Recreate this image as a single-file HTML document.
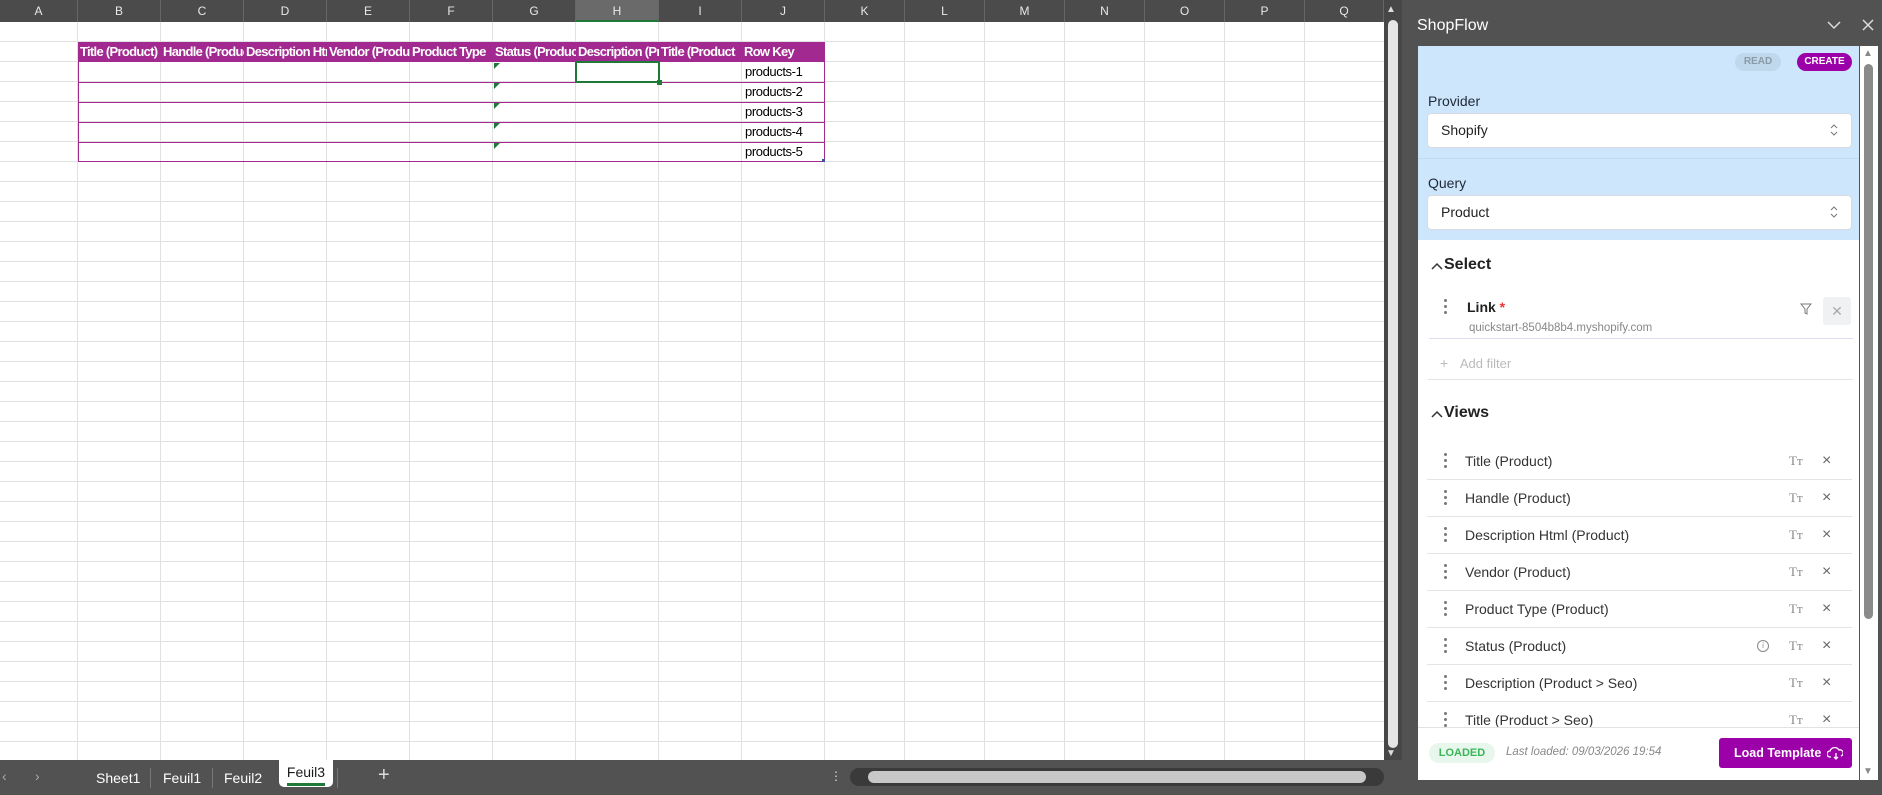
<!DOCTYPE html>
<html><head><meta charset="utf-8"><style>
*{box-sizing:border-box;margin:0;padding:0}
body{width:1882px;height:795px;overflow:hidden;background:#fff;font-family:"Liberation Sans",sans-serif;position:relative}
.a{position:absolute}
.colh{top:0;height:22px;background:#4b4b4b;color:#e8e8e8;font-size:12px;line-height:22px;text-align:center;border-right:1px solid #666}
.vl{top:22px;height:738px;width:1px;background:#e1e1e1}
.grid{left:0;top:22px;width:1384px;height:738px;background:repeating-linear-gradient(to bottom,transparent 0,transparent 19px,#e1e1e1 19px,#e1e1e1 20px)}
.th{top:42px;height:20px;background:#a2298f;color:#fff;font-weight:bold;font-size:13px;line-height:20px;white-space:nowrap;overflow:hidden;padding-left:2px;letter-spacing:-0.7px}
.rowb{left:78px;width:747px;height:1px;background:#a2298f}
.pk{left:742px;width:83px;height:20px;font-size:13px;line-height:20px;padding-left:3px;letter-spacing:-0.4px}
.tri{width:0;height:0;border-top:6px solid #1e7a36;border-right:6px solid transparent;left:494px}
.panel{left:1402px;top:0;width:480px;height:795px;background:#525252}
.lbl{font-size:14px;color:#1f2937;font-weight:500}
.sel{left:1427px;width:425px;height:35px;background:#fff;border:1px solid #d6dbe1;border-radius:4px;font-size:14px;color:#222;line-height:33px;padding-left:13px}
.vrow{left:1427px;width:425px;height:37px;border-bottom:1px solid #e2e4e8;font-size:14px;color:#333;line-height:36px}
.dots{position:absolute;left:17px;top:10px;width:4px}
.dots i{display:block;width:3px;height:3px;border-radius:50%;background:#777;margin-bottom:3px}
.tt{position:absolute;left:362px;font-size:13px;color:#888;font-family:"Liberation Serif",serif}
.x{position:absolute;left:395px;color:#666;font-size:16px}
</style></head><body>
<div class="a colh" style="left:0;width:78px">A</div>
<div class="a colh" style="left:78px;width:83px">B</div>
<div class="a colh" style="left:161px;width:83px">C</div>
<div class="a colh" style="left:244px;width:83px">D</div>
<div class="a colh" style="left:327px;width:83px">E</div>
<div class="a colh" style="left:410px;width:83px">F</div>
<div class="a colh" style="left:493px;width:83px">G</div>
<div class="a colh" style="left:576px;width:83px;background:#6a6a6a;border-bottom:2px solid #1e7a36">H</div>
<div class="a colh" style="left:659px;width:83px">I</div>
<div class="a colh" style="left:742px;width:83px">J</div>
<div class="a colh" style="left:825px;width:80px">K</div>
<div class="a colh" style="left:905px;width:80px">L</div>
<div class="a colh" style="left:985px;width:80px">M</div>
<div class="a colh" style="left:1065px;width:80px">N</div>
<div class="a colh" style="left:1145px;width:80px">O</div>
<div class="a colh" style="left:1225px;width:80px">P</div>
<div class="a colh" style="left:1305px;width:79px">Q</div>
<div class="a grid"></div>
<div class="a vl" style="left:77px"></div><div class="a vl" style="left:160px"></div><div class="a vl" style="left:243px"></div><div class="a vl" style="left:326px"></div><div class="a vl" style="left:409px"></div><div class="a vl" style="left:492px"></div><div class="a vl" style="left:575px"></div><div class="a vl" style="left:658px"></div><div class="a vl" style="left:741px"></div><div class="a vl" style="left:824px"></div><div class="a vl" style="left:904px"></div><div class="a vl" style="left:984px"></div><div class="a vl" style="left:1064px"></div><div class="a vl" style="left:1144px"></div><div class="a vl" style="left:1224px"></div><div class="a vl" style="left:1304px"></div>
<div class="a" style="left:78px;top:42px;width:1px;height:120px;background:#a2298f"></div>
<div class="a" style="left:824px;top:42px;width:1px;height:120px;background:#a2298f"></div>
<div class="a th" style="left:78px;width:83px">Title (Product)</div>
<div class="a th" style="left:161px;width:83px">Handle (Product)</div>
<div class="a th" style="left:244px;width:83px">Description Html</div>
<div class="a th" style="left:327px;width:83px">Vendor (Product)</div>
<div class="a th" style="left:410px;width:83px">Product Type</div>
<div class="a th" style="left:493px;width:83px">Status (Product)</div>
<div class="a th" style="left:576px;width:83px">Description (Pr</div>
<div class="a th" style="left:659px;width:83px">Title (Product</div>
<div class="a th" style="left:742px;width:83px">Row Key</div>
<div class="a rowb" style="top:82px"></div><div class="a rowb" style="top:102px"></div><div class="a rowb" style="top:122px"></div><div class="a rowb" style="top:142px"></div><div class="a rowb" style="top:161px"></div>
<div class="a pk" style="top:62px">products-1</div><div class="a pk" style="top:82px">products-2</div><div class="a pk" style="top:102px">products-3</div><div class="a pk" style="top:122px">products-4</div><div class="a pk" style="top:142px">products-5</div>
<div class="a tri" style="top:63px"></div><div class="a tri" style="top:83px"></div><div class="a tri" style="top:103px"></div><div class="a tri" style="top:123px"></div><div class="a tri" style="top:143px"></div>
<div class="a" style="left:575px;top:61px;width:85px;height:22px;border:2px solid #1e7a36"></div>
<div class="a" style="left:657px;top:80px;width:5px;height:5px;background:#1e7a36"></div>
<div class="a" style="left:822px;top:159px;width:3px;height:3px;background:#4050a0"></div>
<div class="a" style="left:1384px;top:0;width:18px;height:760px;background:#474747"></div>
<div class="a" style="left:1388px;top:20px;width:10px;height:728px;background:#e6e6e6;border-radius:5px"></div>
<div class="a" style="left:1386px;top:4px;color:#ddd;font-size:10px">▲</div>
<div class="a" style="left:1386px;top:748px;color:#ddd;font-size:10px">▼</div>
<div class="a" style="left:0;top:760px;width:1402px;height:35px;background:#525252"></div>
<div class="a" style="left:2px;top:768px;color:#aaa;font-size:14px">‹</div>
<div class="a" style="left:35px;top:768px;color:#aaa;font-size:14px">›</div>
<div class="a" style="left:96px;top:770px;color:#fff;font-size:14px">Sheet1</div>
<div class="a" style="left:150px;top:768px;width:1px;height:20px;background:#777"></div>
<div class="a" style="left:163px;top:770px;color:#fff;font-size:14px">Feuil1</div>
<div class="a" style="left:212px;top:768px;width:1px;height:20px;background:#777"></div>
<div class="a" style="left:224px;top:770px;color:#fff;font-size:14px">Feuil2</div>
<div class="a" style="left:279px;top:760px;width:54px;height:27px;background:#fff;border-radius:0 0 5px 5px;color:#1a1a1a;font-size:14px;text-align:center;line-height:22px;padding-top:1px">Feuil3<div style="margin:0 auto;width:38px;height:3px;background:#1e7a36"></div></div>
<div class="a" style="left:337px;top:768px;width:1px;height:20px;background:#777"></div>
<div class="a" style="left:378px;top:764px;color:#ddd;font-size:20px">+</div>
<div class="a" style="left:830px;top:769px;color:#ddd;font-size:12px">⋮</div>
<div class="a" style="left:850px;top:768px;width:534px;height:18px;background:#3a3a3a;border-radius:9px"></div>
<div class="a" style="left:868px;top:771px;width:498px;height:12px;background:#c8c8c8;border-radius:6px"></div>
<div class="a panel"></div>
<div class="a" style="left:1417px;top:17px;color:#fff;font-size:16px">ShopFlow</div>
<svg class="a" style="left:1827px;top:20px" width="14" height="10"><path d="M1 2l6 6 6-6" stroke="#ddd" stroke-width="1.5" fill="none"/></svg>
<svg class="a" style="left:1862px;top:19px" width="12" height="12"><path d="M1 1l10 10M11 1L1 11" stroke="#ddd" stroke-width="1.5"/></svg>
<div class="a" style="left:1418px;top:46px;width:441px;height:734px;background:#fff"></div>
<div class="a" style="left:1418px;top:46px;width:441px;height:194px;background:#cde6fb"></div>
<div class="a" style="left:1418px;top:158px;width:441px;height:1px;background:#c2dbef"></div>
<div class="a" style="left:1735px;top:53px;width:46px;height:18px;border-radius:9px;background:#c0d8ec;color:#8a9aa8;font-size:10px;font-weight:bold;text-align:center;line-height:18px">READ</div>
<div class="a" style="left:1797px;top:53px;width:55px;height:18px;border-radius:9px;background:#9c00a8;color:#fff;font-size:10px;font-weight:bold;text-align:center;line-height:18px">CREATE</div>
<div class="a lbl" style="left:1428px;top:93px">Provider</div>
<div class="a sel" style="top:113px">Shopify</div>
<div class="a lbl" style="left:1428px;top:175px">Query</div>
<div class="a sel" style="top:195px">Product</div>
<svg class="a" style="left:1830px;top:123px" width="8" height="14"><path d="M1 5l3-3 3 3M1 9l3 3 3-3" stroke="#777" fill="none"/></svg>
<svg class="a" style="left:1830px;top:205px" width="8" height="14"><path d="M1 5l3-3 3 3M1 9l3 3 3-3" stroke="#777" fill="none"/></svg>
<svg class="a" style="left:1431px;top:262px" width="12" height="8"><path d="M1 7l5-5 5 5" stroke="#333" stroke-width="1.5" fill="none"/></svg>
<div class="a" style="left:1444px;top:256px;font-size:16px;font-weight:bold;color:#222">Select</div>
<div class="a" style="left:1444px;top:299px"><div class="dots" style="left:0;top:0"><i></i><i></i><i></i></div></div>
<div class="a" style="left:1467px;top:299px;font-size:14px;font-weight:bold;color:#222">Link <span style="color:#e33">*</span></div>
<div class="a" style="left:1469px;top:322px;font-size:11.5px;color:#888">quickstart-8504b8b4.myshopify.com</div>
<svg class="a" style="left:1800px;top:303px" width="12" height="12"><path d="M1 1h10L7 6v5L5 10V6z" stroke="#777" fill="none"/></svg>
<div class="a" style="left:1823px;top:297px;width:28px;height:28px;background:#f0f1f3;border-radius:3px;color:#aaa;text-align:center;line-height:28px;font-size:14px">✕</div>
<div class="a" style="left:1429px;top:338px;width:424px;height:1px;background:#dde"></div>
<div class="a" style="left:1440px;top:355px;color:#bbb;font-size:14px">+ &nbsp;&nbsp;<span style="font-size:13px">Add filter</span></div>
<div class="a" style="left:1428px;top:379px;width:425px;height:1px;background:#e2e4e8"></div>
<svg class="a" style="left:1431px;top:410px" width="12" height="8"><path d="M1 7l5-5 5 5" stroke="#333" stroke-width="1.5" fill="none"/></svg>
<div class="a" style="left:1444px;top:404px;font-size:16px;font-weight:bold;color:#222">Views</div>
<div class="a vrow" style="top:443px"><div class="dots"><i></i><i></i><i></i></div><span style="margin-left:38px">Title (Product)</span><span class="tt">Tт</span><span class="x">×</span></div>
<div class="a vrow" style="top:480px"><div class="dots"><i></i><i></i><i></i></div><span style="margin-left:38px">Handle (Product)</span><span class="tt">Tт</span><span class="x">×</span></div>
<div class="a vrow" style="top:517px"><div class="dots"><i></i><i></i><i></i></div><span style="margin-left:38px">Description Html (Product)</span><span class="tt">Tт</span><span class="x">×</span></div>
<div class="a vrow" style="top:554px"><div class="dots"><i></i><i></i><i></i></div><span style="margin-left:38px">Vendor (Product)</span><span class="tt">Tт</span><span class="x">×</span></div>
<div class="a vrow" style="top:591px"><div class="dots"><i></i><i></i><i></i></div><span style="margin-left:38px">Product Type (Product)</span><span class="tt">Tт</span><span class="x">×</span></div>
<div class="a vrow" style="top:628px"><div class="dots"><i></i><i></i><i></i></div><span style="margin-left:38px">Status (Product)</span><span style="position:absolute;left:330px;top:12px;width:12px;height:12px;border:1px solid #888;border-radius:50%;font-size:8px;line-height:10px;text-align:center;color:#888">i</span><span class="tt">Tт</span><span class="x">×</span></div>
<div class="a vrow" style="top:665px"><div class="dots"><i></i><i></i><i></i></div><span style="margin-left:38px">Description (Product &gt; Seo)</span><span class="tt">Tт</span><span class="x">×</span></div>
<div class="a vrow" style="top:702px;border:none"><div class="dots"><i></i><i></i><i></i></div><span style="margin-left:38px">Title (Product &gt; Seo)</span><span class="tt">Tт</span><span class="x">×</span></div>
<div class="a" style="left:1418px;top:727px;width:441px;height:53px;background:#fff;border-top:1px solid #e0e2e6"></div>
<div class="a" style="left:1429px;top:743px;width:66px;height:20px;border-radius:10px;background:#e8f7ec;color:#3cb55a;font-size:11px;font-weight:bold;text-align:center;line-height:20px">LOADED</div>
<div class="a" style="left:1506px;top:746px;font-size:11.5px;font-style:italic;color:#888">Last loaded: 09/03/2026 19:54</div>
<div class="a" style="left:1719px;top:738px;width:133px;height:30px;background:#9c00a8;border-radius:3px;color:#fff;font-size:12.5px;font-weight:bold;line-height:30px;padding-left:15px">Load Template<svg style="position:absolute;right:9px;top:8px" width="16" height="14"><path d="M4 11H3a3 3 0 0 1 0-6 5 5 0 0 1 9-1 3 3 0 0 1 2 6M9 7v6M7 11l2 2 2-2" stroke="#fff" stroke-width="1.3" fill="none"/></svg></div>
<div class="a" style="left:1860px;top:46px;width:18px;height:734px;background:#fff"></div>
<div class="a" style="left:1864px;top:64px;width:9px;height:555px;background:#8a8a8a;border-radius:5px"></div>
<div class="a" style="left:1863px;top:48px;color:#888;font-size:10px">▲</div>
<div class="a" style="left:1863px;top:766px;color:#888;font-size:10px">▼</div>
</body></html>
